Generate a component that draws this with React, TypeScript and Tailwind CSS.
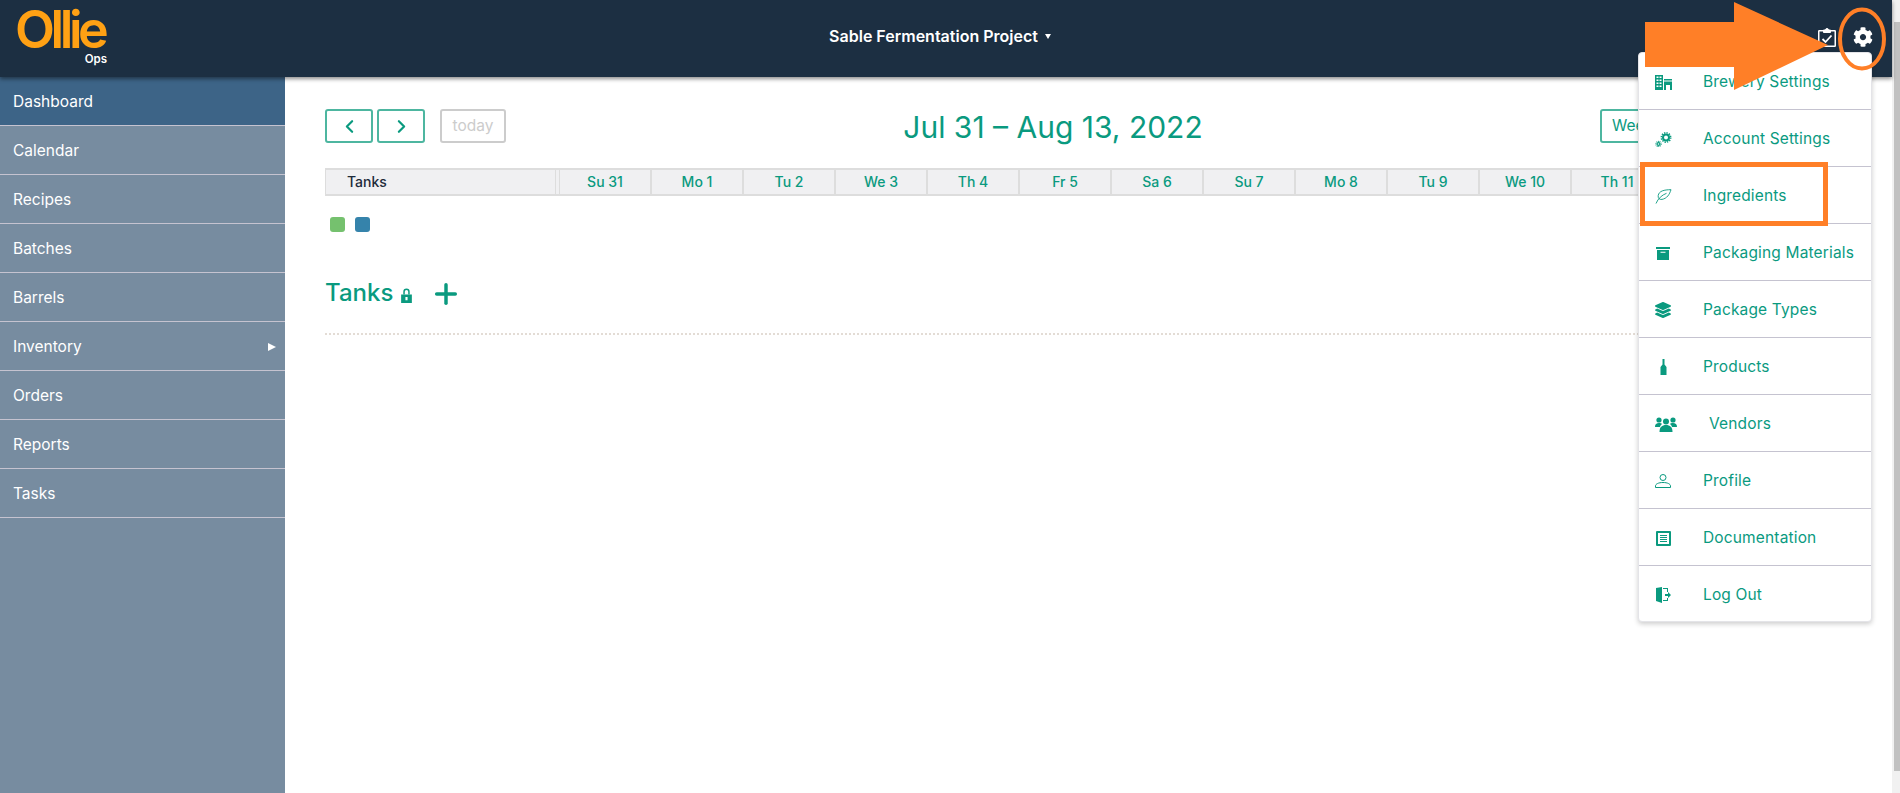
import { ChevronLeft, ChevronRight, Plus } from "lucide-react"
import { FaCog, FaLayerGroup } from "react-icons/fa"
import type { ReactNode } from "react"

const navItems = ["Dashboard", "Calendar", "Recipes", "Batches", "Barrels", "Inventory", "Orders", "Reports", "Tasks"]
const days = ["Su 31", "Mo 1", "Tu 2", "We 3", "Th 4", "Fr 5", "Sa 6", "Su 7", "Mo 8", "Tu 9", "We 10", "Th 11", "Fr 12", "Sa 13"]

const BuildingIcon = () => (
  <svg viewBox="0 0 17 15" className="h-[15px] w-[17px] shrink-0" fill="currentColor">
    <path fillRule="evenodd" d="M0 0h8v15H0zM1.500 1.500v1.500h2V1.500zm3 0v1.500h2V1.500zM1.500 4.500v1.500h2V4.500zm3 0v1.500h2V4.500zM1.500 7.500v1.500h2V7.500zm3 0v1.500h2V7.500zM1.500 10.500v1.500h2v-1.500zm3 0v1.500h2v-1.500z" />
    <path fillRule="evenodd" d="M9 4h8v1.500H9zM9 6.500h8V15h-2v-5h-4v5H9z" />
  </svg>
)

const GearsIcon = () => (
  <svg viewBox="0 0 17 15" className="h-[15px] w-[17px] shrink-0" fill="none" stroke="currentColor">
    <circle cx="11" cy="5.500" r="3" strokeWidth="2" />
    <circle cx="11" cy="5.500" r="4.700" strokeWidth="1.500" strokeDasharray="1.300 1.150" />
    <circle cx="3.500" cy="12" r="1.400" strokeWidth="1.200" />
    <circle cx="3.500" cy="12" r="2.600" strokeWidth="1.100" strokeDasharray="0.900 0.730" />
  </svg>
)

const LeafIcon = () => (
  <svg viewBox="0 0 17 15" className="h-[15px] w-[17px] shrink-0" fill="none" stroke="currentColor" strokeWidth="0.900">
    <path d="M16 .7C9 .7 4 2 3.200 6.500 2.800 9.300 4.500 10.800 7 10.400 12 9.500 14.500 5.500 16 .7z" />
    <path d="M1 14.500C3 9.500 7 6 11.500 4.300" />
  </svg>
)

const BoxIcon = () => (
  <svg viewBox="0 0 14 13" className="h-[13px] w-[14px] shrink-0" fill="currentColor">
    <path fillRule="evenodd" d="M0 0h14v2H0zM1 3h12v10H1zM4.500 4.800v1h5v-1z" />
  </svg>
)

const BottleIcon = () => (
  <svg viewBox="0 0 7 16" className="h-4 w-[7px] shrink-0" fill="currentColor">
    <path d="M2.500 0h2v5.500L6.500 8v8H.5V8l2-2.500z" />
  </svg>
)

const VendorsIcon = () => (
  <svg viewBox="0 0 22 15" className="ml-[6px] h-[15px] w-[22px] shrink-0" fill="currentColor">
    <circle cx="4" cy="3" r="2.600" />
    <circle cx="18" cy="3" r="2.600" />
    <path d="M0 10c0-3 1.500-4 4-4 1.500 0 2.500.4 3 1-1.200 1-1.800 2-2 3z" />
    <path d="M22 10c0-3-1.500-4-4-4-1.500 0-2.500.4-3 1 1.200 1 1.800 2 2 3z" />
    <circle cx="11" cy="4.500" r="3" />
    <path d="M4.500 15c0-5 2.500-7 6.500-7s6.500 2 6.500 7z" />
  </svg>
)

const ProfileIcon = () => (
  <svg viewBox="0 0 16 14" className="h-[14px] w-4 shrink-0" fill="none" stroke="currentColor" strokeWidth="1">
    <circle cx="8" cy="3.500" r="3" />
    <path d="M.5 13.500v-1.500c0-2 3-3.500 7.500-3.500s7.500 1.500 7.500 3.500v1.500z" />
  </svg>
)

const DocIcon = () => (
  <svg viewBox="0 0 15 15" className="h-[15px] w-[15px] shrink-0" fill="currentColor">
    <path fillRule="evenodd" d="M1 0h13a1 1 0 0 1 1 1v13a1 1 0 0 1-1 1H1a1 1 0 0 1-1-1V1a1 1 0 0 1 1-1zm1 2v11h11V2zm2 2h7v1H4zm0 2h7v1H4zm0 2h7v1H4zm0 2h7v1H4z" />
  </svg>
)

const DoorIcon = () => (
  <svg viewBox="0 0 15 16" className="h-4 w-[15px] shrink-0" fill="currentColor">
    <path d="M0 1l6-1v16l-6-2z" />
    <path d="M7 1h5v4h-1V2H7zM7 13h4v-2h1v3H7zM9 7h3V5l3 3-3 3V9H9z" />
  </svg>
)

const ClipboardIcon = () => (
  <svg viewBox="0 0 18 20" className="h-5 w-[18px] shrink-0" fill="none" stroke="currentColor">
    <rect x="0.750" y="3.750" width="16.500" height="15.500" rx="0.500" strokeWidth="1.500" />
    <path d="M5.500 5.500V3H7.500a1.500 1.500 0 0 1 3 0h2V5.500z" fill="currentColor" strokeWidth="1" />
    <path d="M4.500 12l3 3 6-6.500" strokeWidth="1.800" />
  </svg>
)

const LockIcon = () => (
  <svg viewBox="0 0 10 14" className="ml-[8px] mt-[5px] h-[15px] w-[11px] shrink-0" fill="currentColor">
    <path fillRule="evenodd" d="M0 6h10v8H0zM4 8.500v3h2v-3z" />
    <path d="M2 6V3.500a3 3 0 0 1 6 0V6H6.600V3.500a1.600 1.600 0 0 0-3.200 0V6z" />
  </svg>
)

const menuItems: { label: string; icon: ReactNode; extra?: string }[] = [
  { label: "Brewery Settings", icon: <BuildingIcon /> },
  { label: "Account Settings", icon: <GearsIcon /> },
  { label: "Ingredients", icon: <LeafIcon /> },
  { label: "Packaging Materials", icon: <BoxIcon /> },
  { label: "Package Types", icon: <FaLayerGroup size={16} className="shrink-0" /> },
  { label: "Products", icon: <BottleIcon /> },
  { label: "Vendors", icon: <VendorsIcon />, extra: "pl-[6px]" },
  { label: "Profile", icon: <ProfileIcon /> },
  { label: "Documentation", icon: <DocIcon /> },
  { label: "Log Out", icon: <DoorIcon /> },
]

export default function App() {
  return (
    <div className="relative flex h-[793px] overflow-hidden bg-white font-['Inter',sans-serif]">
      <div className="flex min-w-0 flex-1 flex-col">
        {/* Top bar */}
        <header className="relative z-10 grid h-[77px] shrink-0 grid-cols-[1fr_auto_1fr] bg-[#1c2f42] shadow-[0_2px_4px_rgba(0,0,0,0.45)]">
          <div className="flex w-[107px] flex-col items-end pl-[15px] pt-[7px]">
            <span className="w-full whitespace-nowrap text-[52px] font-semibold leading-[46px] tracking-[-0.085em] text-[#ffa114]">Ollie</span>
            <span className="text-[11.5px] font-semibold leading-[12px] text-white">Ops</span>
          </div>
          <div className="flex items-start gap-[7px] pr-[12px] pt-[26px] text-[16px] font-semibold leading-[20px] text-white">
            Sable Fermentation Project
            <span className="mt-[8px] border-x-[3.5px] border-t-[5px] border-x-transparent border-t-white" />
          </div>
          <div className="flex items-start justify-end gap-[17px] pr-[19px] pt-[27px] text-white">
            <ClipboardIcon />
            <FaCog size={20} />
          </div>
        </header>

        <div className="flex min-h-0 flex-1">
          {/* Side nav */}
          <nav className="w-[285px] shrink-0 bg-[#778ca0] text-[15.5px] text-white">
            {navItems.map((item, i) => (
              <div
                key={item}
                className={
                  "flex h-[49px] items-center justify-between border-b border-[#c5c3d0] pl-[13px] pr-[9px] pt-px " +
                  (i === 0 ? "bg-[#3d6487]" : "")
                }
              >
                {item}
                {item === "Inventory" && (
                  <span className="border-y-[4px] border-l-[8px] border-y-transparent border-l-white" />
                )}
              </div>
            ))}
          </nav>

          {/* Calendar + tanks */}
          <main className="min-w-0 flex-1 pl-[40px] pr-[45px] pt-[32px] text-[#0a9a7f]">
            <div className="flex h-[34px] items-center">
              <button className="grid h-[34px] w-[48px] place-items-center rounded-[3px] border-2 border-[#4db6a0]">
                <ChevronLeft size={21} strokeWidth={2.5} />
              </button>
              <button className="ml-[4px] grid h-[34px] w-[48px] place-items-center rounded-[3px] border-2 border-[#4db6a0]">
                <ChevronRight size={21} strokeWidth={2.5} />
              </button>
              <button className="ml-[15px] h-[34px] w-[66px] rounded-[3px] border-2 border-[#cccccc] text-[15.5px] text-[#cccccc]">
                today
              </button>
              <div className="flex-1 pt-[2px] text-center text-[30px] leading-[34px]">Jul 31 – Aug 13, 2022</div>
              <button className="mr-[-3px] h-[34px] w-[250px] rounded-[3px] border-2 border-[#4db6a0] pl-[10px] text-left text-[15.5px]">
                Week
              </button>
            </div>

            <div className="mt-[25px] flex h-[28px] border-y-2 border-[#dddddd] bg-[#f0f0f2] text-[14px] font-medium leading-[23px]">
              <div className="w-[231px] border-x border-[#dddddd] pl-[21px] text-[#1e2b3a]">Tanks</div>
              <div className="w-[3px]" />
              {days.map((day) => (
                <div key={day} className="w-[92px] border-x border-[#dddddd] text-center">
                  {day}
                </div>
              ))}
            </div>

            <div className="ml-[5px] mt-[21px] flex gap-[10px]">
              <span className="h-[15px] w-[15px] rounded-[3px] bg-[#75c16e]" />
              <span className="h-[15px] w-[15px] rounded-[3px] bg-[#3583ab]" />
            </div>

            <div className="mt-[44px] flex items-center text-[24px] font-medium leading-[32px]">
              Tanks
              <LockIcon />
              <Plus size={32} strokeWidth={2.6} className="ml-[18px] mt-[2px]" />
            </div>
            <div className="mt-[23px] border-t-2 border-dotted border-[#e3dcd5]" />
          </main>
        </div>
      </div>

      {/* Scrollbar */}
      <div className="flex w-[8px] shrink-0 flex-col items-end bg-[#f1f1f1] py-[22px]">
        <div className="w-[6px] flex-1 bg-[#c1c1c1]" />
      </div>

      {/* Settings menu */}
      <div className="absolute left-[1638px] top-[52px] z-20 w-[234px] rounded-[4px] border border-[#e4e4e8] bg-white text-[15.5px] tracking-[0.01em] text-[#0a9a7f] shadow-[0_2px_5px_rgba(0,0,0,0.2)]">
        {menuItems.map((item) => (
          <div key={item.label} className="flex h-[57px] items-center border-b border-[#c5c3d0] pt-[2px] last:h-[55px] last:border-b-0">
            <span className="ml-[16px] flex w-[16px] shrink-0 justify-center">{item.icon}</span>
            <span className={"ml-[32px] " + (item.extra ?? "")}>{item.label}</span>
          </div>
        ))}
      </div>

      {/* Annotations drawn on top of the screenshot */}
      <svg className="pointer-events-none absolute left-0 top-0 z-30 h-[793px] w-[1900px]" viewBox="0 0 1900 793">
        <polygon points="1645,22 1734,22 1734,2 1828,45 1734,90 1734,67 1645,67" fill="#ff7f27" />
        <ellipse cx="1862" cy="39" rx="22" ry="29.500" fill="none" stroke="#ff7f27" strokeWidth="4" />
        <rect x="1642.500" y="164.500" width="183" height="59" fill="none" stroke="#ff7f27" strokeWidth="5" />
      </svg>
    </div>
  )
}
